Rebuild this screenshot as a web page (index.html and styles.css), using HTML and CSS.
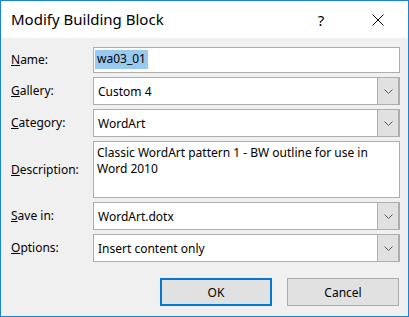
FILE: index.html
```html
<!DOCTYPE html>
<html>
<head>
<meta charset="utf-8">
<title>Modify Building Block</title>
<link rel="stylesheet" href="styles.css">
</head>
<body>
<div class="window">
  <div class="titlebar">
    <div class="title">Modify Building Block</div>
    <div class="tb-btn help">?</div>
    <div class="tb-btn close">
      <svg width="12" height="12" viewBox="0 0 12 12"><path d="M0.5 0.5 L11.5 11.5 M11.5 0.5 L0.5 11.5" stroke="#000" stroke-width="1" fill="none"/></svg>
    </div>
  </div>
  <div class="content">
    <div class="form">
      <label class="lbl"><u>N</u>ame:</label>
      <div class="field input"><span class="sel">wa03_01</span></div>

      <label class="lbl"><u>G</u>allery:</label>
      <div class="field combo"><span class="val">Custom 4</span><span class="drop"><svg width="9" height="5" viewBox="0 0 9 5"><path d="M0.5 0.5 L4.5 4.5 L8.5 0.5" stroke="#5a5a5a" fill="none"/></svg></span></div>

      <label class="lbl"><u>C</u>ategory:</label>
      <div class="field combo"><span class="val">WordArt</span><span class="drop"><svg width="9" height="5" viewBox="0 0 9 5"><path d="M0.5 0.5 L4.5 4.5 L8.5 0.5" stroke="#5a5a5a" fill="none"/></svg></span></div>

      <label class="lbl"><u>D</u>escription:</label>
      <div class="field textarea">Classic WordArt pattern 1 - BW outline for use in<br>Word 2010</div>

      <label class="lbl"><u>S</u>ave in:</label>
      <div class="field combo"><span class="val">WordArt.dotx</span><span class="drop"><svg width="9" height="5" viewBox="0 0 9 5"><path d="M0.5 0.5 L4.5 4.5 L8.5 0.5" stroke="#5a5a5a" fill="none"/></svg></span></div>

      <label class="lbl"><u>O</u>ptions:</label>
      <div class="field combo"><span class="val">Insert content only</span><span class="drop"><svg width="9" height="5" viewBox="0 0 9 5"><path d="M0.5 0.5 L4.5 4.5 L8.5 0.5" stroke="#5a5a5a" fill="none"/></svg></span></div>
    </div>
    <div class="buttons">
      <div class="btn default">OK</div>
      <div class="btn">Cancel</div>
    </div>
  </div>
</div>
</body>
</html>
```

FILE: styles.css
```css
* { box-sizing: border-box; }
html, body { margin: 0; padding: 0; }
body {
  width: 409px;
  height: 317px;
  overflow: hidden;
  font-family: "Noto Sans", "Open Sans", sans-serif;
  font-size: 12px;
  color: #000;
}
.window {
  width: 409px;
  height: 317px;
  border: 1px solid #1883d7;
  background: #f0f0f0;
  display: flex;
  flex-direction: column;
}
.titlebar {
  height: 37px;
  background: #fff;
  display: flex;
  align-items: center;
  padding-left: 10px;
  padding-right: 7px;
}
.title {
  flex: 1;
  font-size: 15px;
  line-height: 20px;
  margin-top: -1px;
}
.tb-btn {
  width: 46px;
  height: 37px;
  display: flex;
  align-items: center;
  justify-content: center;
}
.help {
  font-size: 15px;
  margin-right: 11px;
}
.close svg { display: block; }
.content {
  flex: 1;
  padding: 9px 8px 0 10px;
}
.form {
  display: grid;
  grid-template-columns: 82px 307px;
  grid-template-rows: 26px 28px 28px 57px 28px 28px;
  row-gap: 4px;
  align-items: center;
}
.lbl {
  line-height: 16px;
}
.field {
  height: 100%;
  background: #fff;
  border: 1px solid #adadad;
}
.input {
  padding: 2px 0 0 1px;
}
.sel {
  display: inline-block;
  background: #99c9ef;
  padding: 1px 2px 2px 2px;
  line-height: 16px;
}
.combo {
  display: flex;
  align-items: stretch;
}
.val {
  flex: 1;
  padding-left: 4px;
  display: flex;
  align-items: center;
}
.drop {
  width: 22px;
  background: #e1e1e1;
  border-left: 1px solid #adadad;
  border-right: 1px solid #adadad;
  display: flex;
  align-items: center;
  justify-content: center;
}
.drop svg { display: block; }
.textarea {
  padding: 3px 3px 0 3px;
  line-height: 16px;
}
.buttons {
  display: flex;
  justify-content: flex-end;
  gap: 15px;
  margin-top: 16px;
  padding-right: 1px;
}
.btn {
  width: 112px;
  height: 28px;
  background: #e1e1e1;
  border: 1px solid #adadad;
  display: flex;
  align-items: center;
  justify-content: center;
}
.btn.default {
  border: 2px solid #0078d7;
}
```
